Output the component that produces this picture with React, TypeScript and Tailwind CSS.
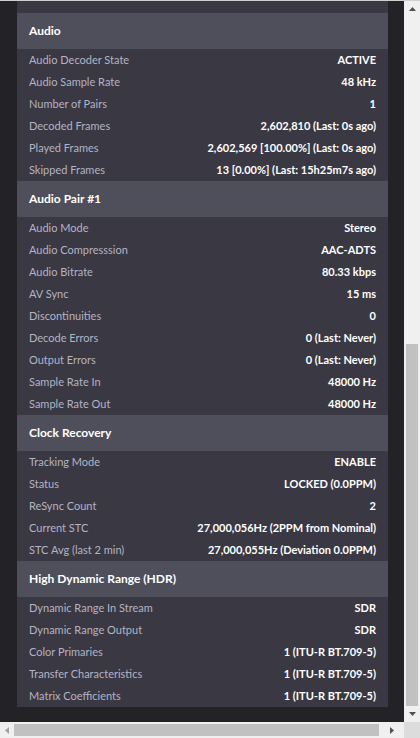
import React from 'react';

type Row = [string, string];

const sections: { title: string; rows: Row[] }[] = [
  {
    title: 'Audio',
    rows: [
      ['Audio Decoder State', 'ACTIVE'],
      ['Audio Sample Rate', '48 kHz'],
      ['Number of Pairs', '1'],
      ['Decoded Frames', '2,602,810 (Last: 0s ago)'],
      ['Played Frames', '2,602,569 [100.00%] (Last: 0s ago)'],
      ['Skipped Frames', '13 [0.00%] (Last: 15h25m7s ago)'],
    ],
  },
  {
    title: 'Audio Pair #1',
    rows: [
      ['Audio Mode', 'Stereo'],
      ['Audio Compresssion', 'AAC-ADTS'],
      ['Audio Bitrate', '80.33 kbps'],
      ['AV Sync', '15 ms'],
      ['Discontinuities', '0'],
      ['Decode Errors', '0 (Last: Never)'],
      ['Output Errors', '0 (Last: Never)'],
      ['Sample Rate In', '48000 Hz'],
      ['Sample Rate Out', '48000 Hz'],
    ],
  },
  {
    title: 'Clock Recovery',
    rows: [
      ['Tracking Mode', 'ENABLE'],
      ['Status', 'LOCKED (0.0PPM)'],
      ['ReSync Count', '2'],
      ['Current STC', '27,000,056Hz (2PPM from Nominal)'],
      ['STC Avg (last 2 min)', '27,000,055Hz (Deviation 0.0PPM)'],
    ],
  },
  {
    title: 'High Dynamic Range (HDR)',
    rows: [
      ['Dynamic Range In Stream', 'SDR'],
      ['Dynamic Range Output', 'SDR'],
      ['Color Primaries', '1 (ITU-R BT.709-5)'],
      ['Transfer Characteristics', '1 (ITU-R BT.709-5)'],
      ['Matrix Coefficients', '1 (ITU-R BT.709-5)'],
    ],
  },
];

export default function App() {
  return (
    <div className="w-[420px] h-[738px] flex flex-col bg-[#f0f0f0] overflow-hidden" style={{ fontFamily: 'Lato, "Open Sans", sans-serif' }}>
      <div className="h-px bg-[#cfcfcf]" />
      <div className="flex flex-1 min-h-0">
        {/* page content */}
        <div className="flex-1 bg-[#222227] overflow-hidden">
          <div className="ml-[17px] w-[371px] bg-[#393843] pt-[12px]">
            {sections.map((s) => (
              <div key={s.title}>
                <div className="h-[36px] px-[12px] flex items-center bg-[#4f4f5c] text-white text-[12px] font-bold">
                  {s.title}
                </div>
                {s.rows.map(([k, v]) => (
                  <div key={k} className="h-[22px] px-[12px] flex items-center justify-between text-[11px]">
                    <span className="text-[#b4b4c4]">{k}</span>
                    <span className="text-white font-bold">{v}</span>
                  </div>
                ))}
              </div>
            ))}
          </div>
        </div>
        {/* vertical scrollbar */}
        <div className="w-[16px] bg-[#f0f0f0] flex flex-col items-center">
          <div className="h-[16px] flex items-center justify-center">
            <svg width="7" height="4" viewBox="0 0 7 4"><path d="M0 4 L3.5 0 L7 4 Z" fill="#505050" /></svg>
          </div>
          <div className="flex-1 w-full px-[2px] flex flex-col">
            <div className="h-[327px]" />
            <div className="flex-1 bg-[#c1c1c1]" />
          </div>
          <div className="h-[16px] flex items-center justify-center">
            <svg width="7" height="4" viewBox="0 0 7 4"><path d="M0 0 L3.5 4 L7 0 Z" fill="#505050" /></svg>
          </div>
        </div>
      </div>
      {/* horizontal scrollbar */}
      <div className="h-[16px] flex bg-[#f0f0f0]">
        <div className="flex-1 flex items-center">
          <div className="w-[14px] flex items-center justify-center">
            <svg width="4" height="7" viewBox="0 0 4 7"><path d="M4 0 L0 3.5 L4 7 Z" fill="#a3a3a3" /></svg>
          </div>
          <div className="flex-1 h-[12px] bg-[#c1c1c1]" />
          <div className="w-[25px] flex items-center justify-center">
            <svg width="4" height="7" viewBox="0 0 4 7"><path d="M0 0 L4 3.5 L0 7 Z" fill="#505050" /></svg>
          </div>
        </div>
        <div className="w-[16px] bg-[#dcdcdc]" />
      </div>
    </div>
  );
}
